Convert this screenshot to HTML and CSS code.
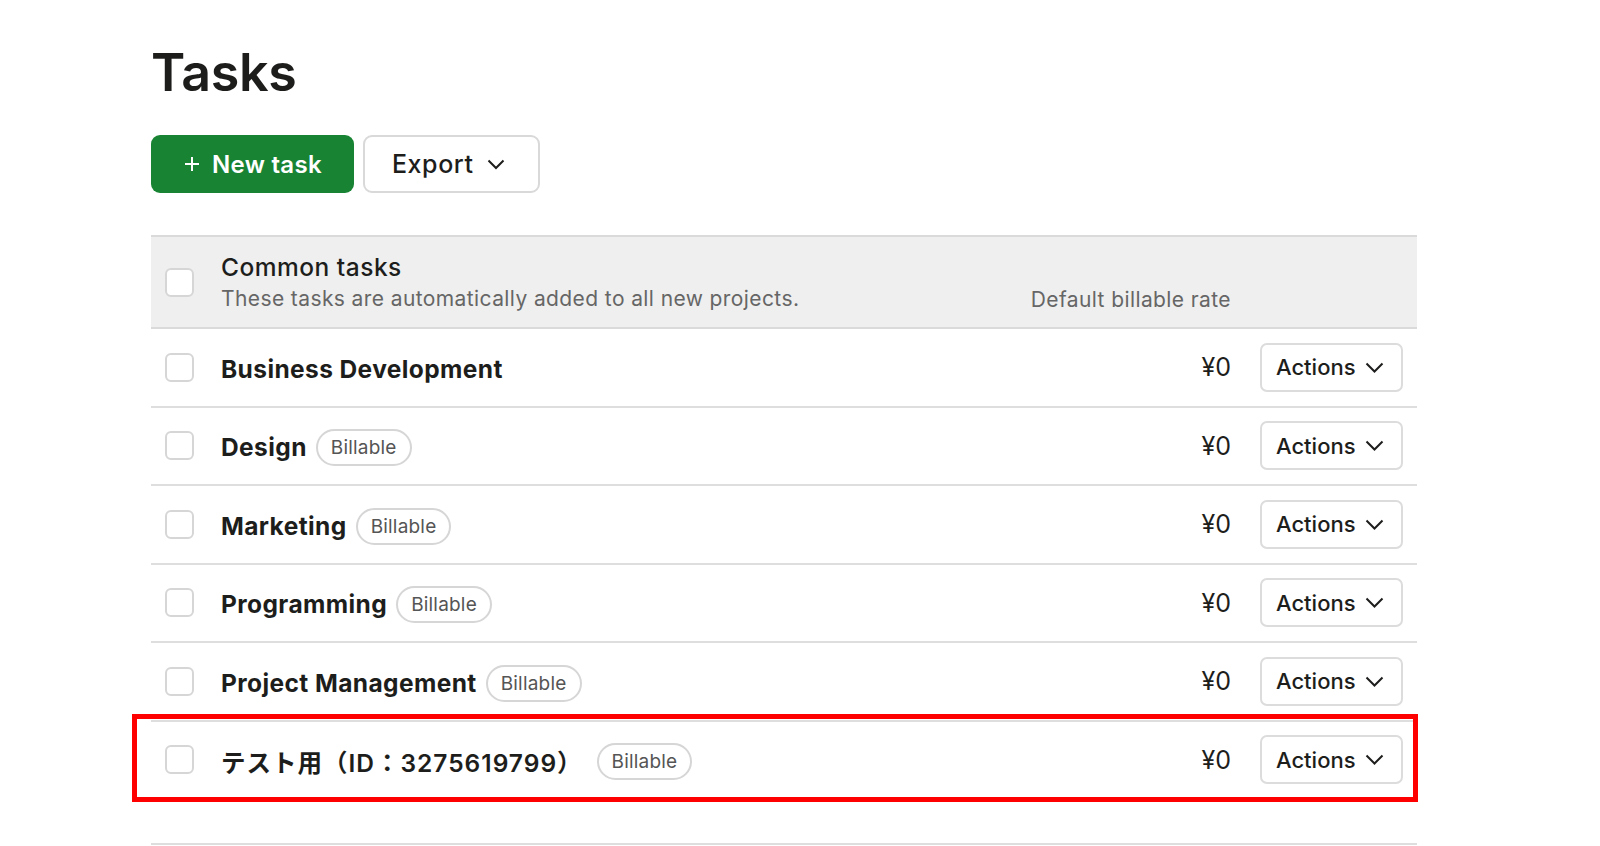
FILE: index.html
```html
<!DOCTYPE html>
<html>
  <head>
    <title>Tasks</title>
    <meta charset="UTF-8" />
    <meta name="viewport" content="width=device-width, initial-scale=1.0" />
    <link rel="stylesheet" href="styles.css">
  </head>
  <body>
    <div class="page">
      <h1>Tasks</h1>

      <div class="toolbar">
        <button class="btn btn-primary">
          <svg class="plus" width="16" height="16" viewBox="0 0 16 16"><path d="M8 1v14M1 8h14" stroke="currentColor" stroke-width="2" fill="none"/></svg>
          New task
        </button>
        <button class="btn btn-default">
          Export
          <svg class="chev" width="18" height="11" viewBox="0 0 18 11"><path d="M1.5 1.5l7.5 7.5 7.5-7.5" stroke="currentColor" stroke-width="2" fill="none"/></svg>
        </button>
      </div>

      <div class="tasks">
        <div class="task-head">
          <span class="check"></span>
          <div class="head-text">
            <div class="head-title">Common tasks</div>
            <div class="head-sub">These tasks are automatically added to all new projects.</div>
          </div>
          <div class="head-rate">Default billable rate</div>
        </div>

        <div class="task-row">
          <span class="check"></span>
          <span class="task-name">Business Development</span>
          <span class="rate">¥0</span>
          <button class="actions">Actions <svg class="chev" width="19" height="11" viewBox="0 0 19 11"><path d="M1.5 1.5l8 8 8-8" stroke="currentColor" stroke-width="2" fill="none"/></svg></button>
        </div>

        <div class="task-row">
          <span class="check"></span>
          <span class="task-name">Design</span>
          <span class="pill">Billable</span>
          <span class="rate">¥0</span>
          <button class="actions">Actions <svg class="chev" width="19" height="11" viewBox="0 0 19 11"><path d="M1.5 1.5l8 8 8-8" stroke="currentColor" stroke-width="2" fill="none"/></svg></button>
        </div>

        <div class="task-row">
          <span class="check"></span>
          <span class="task-name">Marketing</span>
          <span class="pill">Billable</span>
          <span class="rate">¥0</span>
          <button class="actions">Actions <svg class="chev" width="19" height="11" viewBox="0 0 19 11"><path d="M1.5 1.5l8 8 8-8" stroke="currentColor" stroke-width="2" fill="none"/></svg></button>
        </div>

        <div class="task-row">
          <span class="check"></span>
          <span class="task-name">Programming</span>
          <span class="pill">Billable</span>
          <span class="rate">¥0</span>
          <button class="actions">Actions <svg class="chev" width="19" height="11" viewBox="0 0 19 11"><path d="M1.5 1.5l8 8 8-8" stroke="currentColor" stroke-width="2" fill="none"/></svg></button>
        </div>

        <div class="task-row">
          <span class="check"></span>
          <span class="task-name">Project Management</span>
          <span class="pill">Billable</span>
          <span class="rate">¥0</span>
          <button class="actions">Actions <svg class="chev" width="19" height="11" viewBox="0 0 19 11"><path d="M1.5 1.5l8 8 8-8" stroke="currentColor" stroke-width="2" fill="none"/></svg></button>
        </div>

        <div class="task-row highlighted">
          <span class="check"></span>
          <span class="task-name jp">テスト用（ID：3275619799）</span>
          <span class="pill">Billable</span>
          <span class="rate">¥0</span>
          <button class="actions">Actions <svg class="chev" width="19" height="11" viewBox="0 0 19 11"><path d="M1.5 1.5l8 8 8-8" stroke="currentColor" stroke-width="2" fill="none"/></svg></button>
          <div class="mark"></div>
        </div>

        <div class="tasks-end"></div>
      </div>
    </div>
  </body>
</html>
```

FILE: styles.css
```css
body {
  margin: 0;
  background: #fff;
  font-family: Inter, "Noto Sans CJK JP", sans-serif;
  color: #1d1e1c;
}
.page {
  width: 1266px;
  margin-left: 151px;
}
h1 {
  font-size: 52px;
  font-weight: 600;
  letter-spacing: -0.3px;
  line-height: 66px;
  margin: 40px 0 29px 0;
}
.toolbar {
  display: flex;
  gap: 9px;
}
.btn {
  height: 58px;
  display: flex;
  align-items: center;
  border-radius: 9px;
  font-family: inherit;
  font-size: 24px;
  cursor: pointer;
}
.btn-primary {
  background: #188433;
  color: #fff;
  border: none;
  font-weight: 600;
  letter-spacing: 0.3px;
  padding: 0 32px 0 33px;
  gap: 12px;
}
.btn-default {
  background: #fff;
  color: #1d1e1c;
  border: 2px solid #d9d9d9;
  font-size: 25px;
  font-weight: 500;
  letter-spacing: 0.6px;
  padding: 0 33px 0 27px;
  gap: 13px;
}
.tasks {
  margin-top: 42px;
}
.task-head {
  display: flex;
  align-items: center;
  height: 94px;
  box-sizing: border-box;
  background: #efefef;
  border-top: 2px solid #dadada;
  border-bottom: 2px solid #dadada;
  padding: 0 186px 0 14px;
}
.check {
  width: 29px;
  height: 29px;
  box-sizing: border-box;
  border: 2px solid #d6d6d6;
  border-radius: 6px;
  background: #fff;
  flex-shrink: 0;
  margin-right: 27px;
}
.head-text {
  flex: 1;
  padding-top: 2px;
}
.head-title {
  font-size: 24.5px;
  font-weight: 500;
  letter-spacing: 0.5px;
  line-height: 32px;
}
.head-sub, .head-rate {
  font-size: 21px;
  letter-spacing: 0.4px;
  color: #666;
  line-height: 32px;
}
.head-rate {
  align-self: flex-end;
  margin-bottom: 11px;
}
.task-row {
  position: relative;
  display: flex;
  align-items: center;
  height: 78.5px;
  box-sizing: border-box;
  border-bottom: 2px solid #dedede;
  padding: 0 14px;
}
.task-name {
  font-size: 24.5px;
  font-weight: 700;
  letter-spacing: 0.4px;
  padding-top: 3px;
}
.task-name.jp {
  font-weight: 600;
  letter-spacing: 1px;
}
.pill {
  margin-left: 9px;
  margin-top: 4px;
  height: 37px;
  box-sizing: border-box;
  padding: 0 13px;
  display: flex;
  align-items: center;
  border: 2px solid #d6d6d6;
  border-radius: 20px;
  font-size: 19px;
  letter-spacing: 0.2px;
  color: #555;
}
.jp + .pill {
  margin-left: 14px;
}
.rate {
  margin-left: auto;
  font-size: 25px;
  margin-right: 29px;
}
.actions {
  height: 49px;
  width: 143px;
  box-sizing: border-box;
  display: flex;
  align-items: center;
  justify-content: space-between;
  padding: 0 17px 0 14px;
  background: #fff;
  border: 2px solid #dcdcdc;
  border-radius: 7px;
  font-family: inherit;
  font-size: 22px;
  font-weight: 500;
  color: #1d1e1c;
}
.chev {
  display: block;
}
.mark {
  position: absolute;
  left: -19px;
  right: -1px;
  top: -8px;
  bottom: -4px;
  border: 5px solid #ff0000;
  pointer-events: none;
}
.tasks-end {
  height: 43px;
  border-bottom: 2px solid #dedede;
}
```
